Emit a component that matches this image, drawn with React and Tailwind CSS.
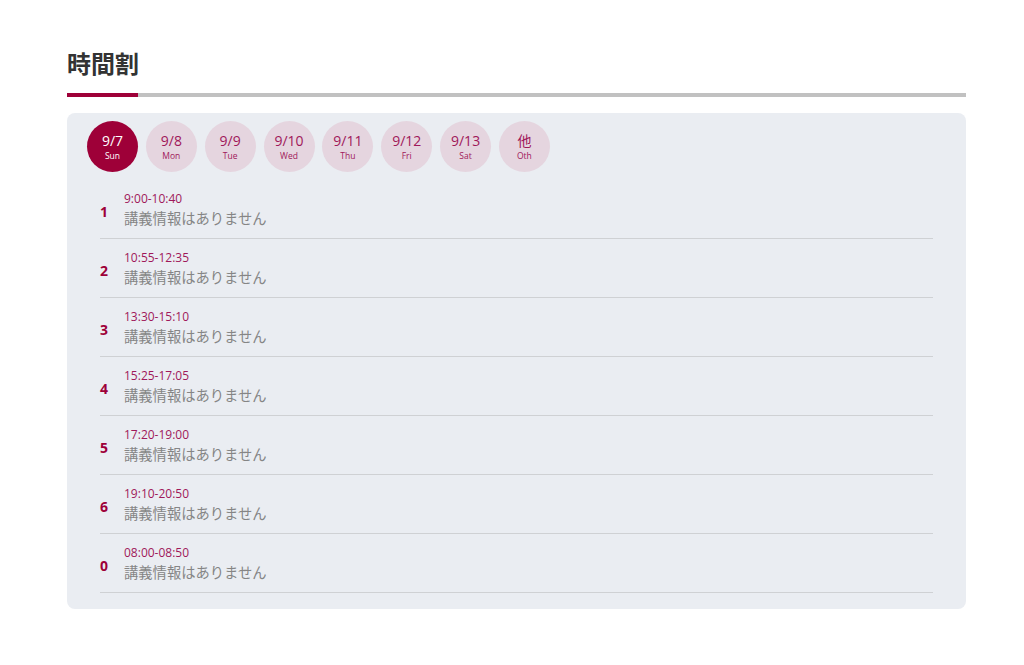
import React from "react";

const days = [
  { date: "9/7", label: "Sun" },
  { date: "9/8", label: "Mon" },
  { date: "9/9", label: "Tue" },
  { date: "9/10", label: "Wed" },
  { date: "9/11", label: "Thu" },
  { date: "9/12", label: "Fri" },
  { date: "9/13", label: "Sat" },
  { date: "他", label: "Oth" },
];

const periods = [
  { no: "1", time: "9:00-10:40" },
  { no: "2", time: "10:55-12:35" },
  { no: "3", time: "13:30-15:10" },
  { no: "4", time: "15:25-17:05" },
  { no: "5", time: "17:20-19:00" },
  { no: "6", time: "19:10-20:50" },
  { no: "0", time: "08:00-08:50" },
];

const App = () => {
  return (
    <div
      className="min-h-[665px] bg-white"
      style={{ fontFamily: '"Open Sans", "Noto Sans CJK JP", sans-serif' }}
    >
      <div className="w-[899px] ml-[67px] pt-[47px]">
        {/* Title */}
        <h1 className="text-[24px] font-bold text-[#333] leading-[34px]">時間割</h1>
        <div className="mt-[12px] flex h-[4px] bg-[#c1c1c1]">
          <div className="w-[71px] bg-[#9e0038]"></div>
        </div>

        {/* Panel */}
        <div className="mt-[16px] bg-[#eaedf2] rounded-lg pt-2 pb-4">
          {/* Day tabs */}
          <div className="flex gap-[7.85px] px-5">
            {days.map((d, i) => (
              <div
                key={d.label}
                className={`w-[51px] h-[51px] rounded-full flex flex-col items-center justify-center ${
                  i === 0 ? "bg-[#9e0038] text-white" : "bg-[#e5d5df] text-[#a0185a]"
                }`}
              >
                <span className="text-[14px] leading-[18px]">{d.date}</span>
                <span className="text-[8.5px] leading-[12px]">{d.label}</span>
              </div>
            ))}
          </div>

          {/* Periods */}
          <div className="mt-2 px-[33px]">
            {periods.map((p) => (
              <div key={p.no} className="flex items-center border-b border-[#cfd1d4] pt-[11px] pb-[7px]">
                <div className="w-[24px] text-[14px] font-bold text-[#9e0038]">{p.no}</div>
                <div className="flex flex-col">
                  <span className="text-[12px] leading-[16px] text-[#a0185a]">{p.time}</span>
                  <span className="text-[14.3px] leading-[24px] text-[#858585]">講義情報はありません</span>
                </div>
              </div>
            ))}
          </div>
        </div>
      </div>
    </div>
  );
};

export default App;
